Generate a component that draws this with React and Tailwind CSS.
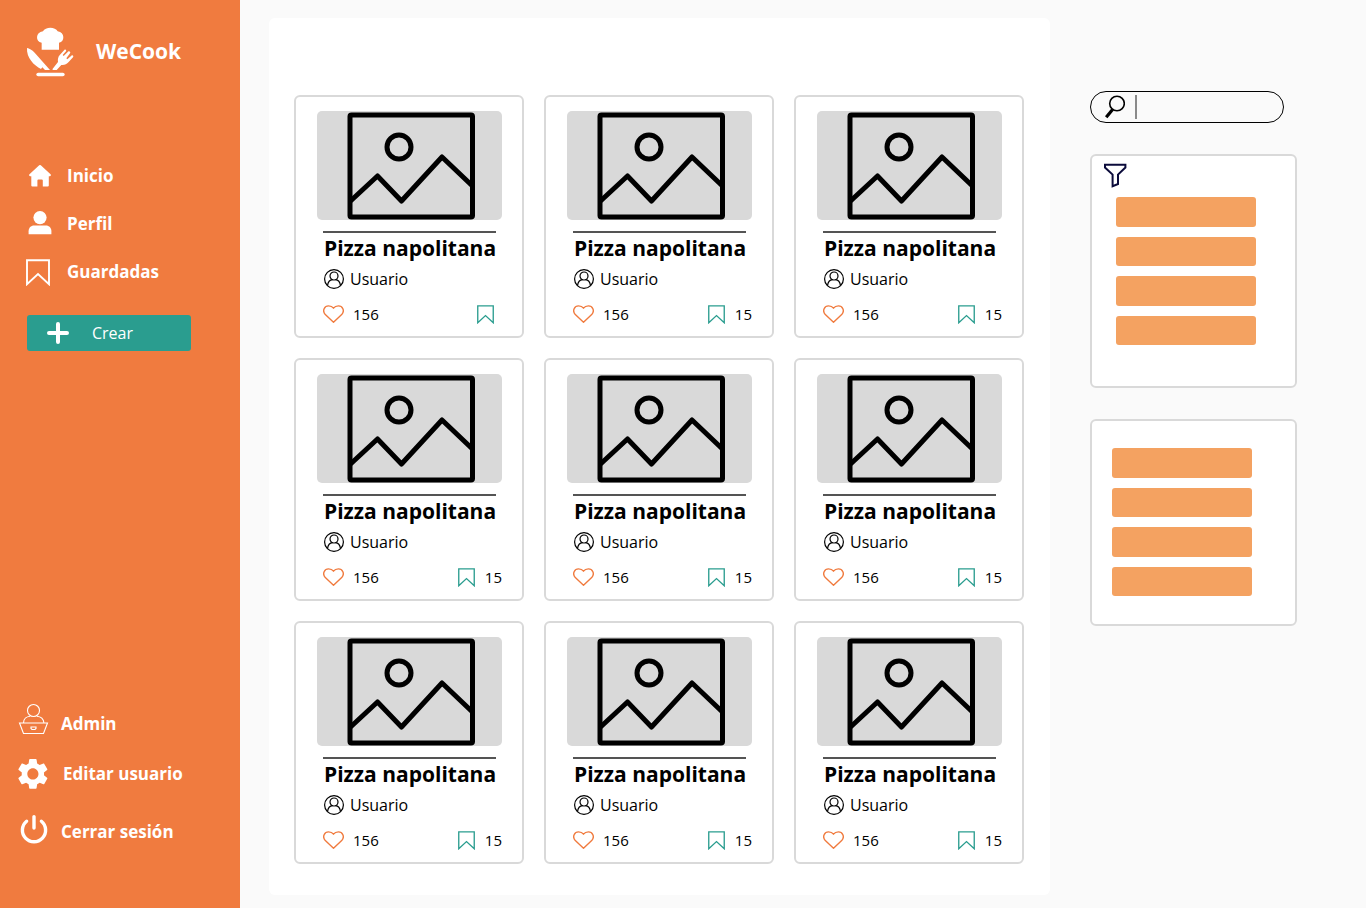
import React from "react";

const cards = [
  { likes: 156 },
  { likes: 156, saved: 15 },
  { likes: 156, saved: 15 },
  { likes: 156, saved: 15 },
  { likes: 156, saved: 15 },
  { likes: 156, saved: 15 },
  { likes: 156, saved: 15 },
  { likes: 156, saved: 15 },
  { likes: 156, saved: 15 },
];

function Logo() {
  return (
    <svg viewBox="82 51 144 150" className="h-[50px] w-12 shrink-0 overflow-visible" fill="#fff" aria-hidden="true">
      <path d="M126 119V98C107 96 107 66 130 64C137 50 167 50 174 64C196 66 196 96 178 98V119Z" />
      <path d="M82 114C89 115 97 120 105 128L151 180H136L128 172L124 177C103 166 80 144 82 114Z" />
      <path d="M160 180H171L185 165C194 166 201 163 207 156L220 142C223 138 219 134 215 137L203 148L200 145L211 130C214 126 209 122 205 125L192 138L189 135L199 124C201 120 197 117 194 120L181 134C175 140 174 148 175 156L158 178Z" />
      <rect x="110" y="188" width="85" height="11" rx="5.5" />
    </svg>
  );
}

function HomeIcon() {
  return (
    <svg viewBox="0 0 24 24" className="h-6 w-6" fill="#fff" aria-hidden="true">
      <path d="M11.2 1.3Q12 .7 12.8 1.3L22.8 10.6Q23.4 12 22 12.2H20.8V21.5Q20.8 22.6 19.7 22.6H14.8V16.4Q14.8 15.4 13.8 15.4H10.4Q9.4 15.4 9.4 16.4V22.6H4.4Q3.3 22.6 3.3 21.5V12.2H2Q.6 12 1.2 10.6Z" />
    </svg>
  );
}

function PersonIcon() {
  return (
    <svg viewBox="0 1 24 24" className="h-6 w-6 overflow-visible" fill="#fff" aria-hidden="true">
      <circle cx="12" cy="6.6" r="6.6" />
      <path d="M.6 23.3V20.2C.6 16.8 2.8 14.4 6.2 14.4H17.8C21.2 14.4 23.4 16.8 23.4 20.2V23.3Z" />
    </svg>
  );
}

function BookmarkIcon({ className, stroke }) {
  return (
    <svg viewBox="0 0 24 27" className={className} fill="none" stroke={stroke} strokeWidth="1.9" aria-hidden="true">
      <path d="M1 1.2H23V25.2L12 15L1 25.2Z" />
    </svg>
  );
}

function AdminIcon() {
  return (
    <svg viewBox="-0.5 5 30 32" className="h-8 w-[30px] overflow-visible" fill="none" stroke="#fff" strokeWidth="1.1" aria-hidden="true">
      <circle cx="15" cy="7.5" r="6" />
      <path d="M5 20C5 16 8 13.6 11.6 13.3M18.4 13.3C22 13.6 25 16 25.5 20M1 20H29L25 30.5H5Z" />
      <path d="M12.5 24H17.5V25.5L16.5 26.5H13.5L12.5 25.5Z" />
    </svg>
  );
}

function GearIcon() {
  return (
    <svg viewBox="2.4 2.4 20 20" className="h-[31px] w-[31px] overflow-visible" fill="#fff" aria-hidden="true">
      <path d="M19.14 12.94c.04-.3.06-.61.06-.94 0-.32-.02-.64-.07-.94l2.03-1.58c.18-.14.23-.41.12-.61l-1.92-3.32c-.12-.22-.37-.29-.59-.22l-2.39.96c-.5-.38-1.03-.7-1.62-.94l-.36-2.54c-.04-.24-.24-.41-.48-.41h-3.84c-.24 0-.43.17-.47.41l-.36 2.54c-.59.24-1.13.57-1.62.94l-2.39-.96c-.22-.08-.47 0-.59.22L2.74 8.87c-.12.21-.08.47.12.61l2.03 1.58c-.05.3-.09.63-.09.94s.02.64.07.94l-2.03 1.58c-.18.14-.23.41-.12.61l1.92 3.32c.12.22.37.29.59.22l2.39-.96c.5.38 1.03.7 1.62.94l.36 2.54c.05.24.24.41.48.41h3.84c.24 0 .44-.17.47-.41l.36-2.54c.59-.24 1.13-.56 1.62-.94l2.39.96c.22.08.47 0 .59-.22l1.92-3.32c.12-.22.07-.47-.12-.61l-2.01-1.58zM12 15.6c-1.98 0-3.6-1.62-3.6-3.6s1.62-3.6 3.6-3.6 3.6 1.62 3.6 3.6-1.62 3.6-3.6 3.6z" />
    </svg>
  );
}

function PowerIcon() {
  return (
    <svg viewBox="0 3 28 30" className="h-[30px] w-7 overflow-visible" fill="none" stroke="#fff" strokeWidth="3.4" strokeLinecap="round" aria-hidden="true">
      <path d="M14 2.6V14M6.6 7.2A11.6 11.6 0 1 0 21.4 7.2" />
    </svg>
  );
}

function PicturePlaceholder() {
  return (
    <svg viewBox="-1.5 1 128 108" className="h-[108px] w-32 overflow-visible" fill="none" stroke="#000" strokeWidth="5" strokeLinejoin="round" role="img" aria-label="Foto de la receta">
      <rect x="2.5" y="4" width="122.5" height="102" rx="1.5" />
      <circle cx="51.5" cy="36" r="12" />
      <path d="M3 90L30 65L54 90L94.5 46L125 75" />
    </svg>
  );
}

function UserIcon() {
  return (
    <svg viewBox="0 0 20 20" className="h-5 w-5 overflow-visible" fill="none" stroke="#000" strokeWidth="1.2" aria-hidden="true">
      <circle cx="10" cy="10" r="9.4" />
      <circle cx="10" cy="7" r="4" />
      <path d="M3.5 16.6C4 12.8 6.2 10.8 8.6 10.6M11.4 10.6C13.8 10.8 16 12.8 16.5 16.6" />
    </svg>
  );
}

function HeartIcon() {
  return (
    <svg viewBox="0 0 21 18" className="h-[18px] w-[21px]" fill="none" stroke="#f07b3f" strokeWidth="1.4" strokeLinejoin="round" aria-hidden="true">
      <path d="M10.5 17.2L2.3 9.6C-1.2 5.6 1.6 .9 5.6 .9C7.8 .9 9.6 2 10.5 3.2C11.4 2 13.2 .9 15.4 .9C19.4 .9 22.2 5.6 18.7 9.6Z" />
    </svg>
  );
}

function NavLink({ icon, children, iconBox }) {
  return (
    <a href="#" className="flex h-12 items-center text-[17px] font-bold text-white">
      <span className={iconBox}>{icon}</span>
      {children}
    </a>
  );
}

function RecipeCard({ likes, saved }) {
  return (
    <article className="rounded-md border-2 border-[#d9d9d9] pt-[14px] pr-5 pb-3 pl-[21px]">
      <div className="flex h-[109px] items-center justify-center rounded-[5px] bg-[#d9d9d9]">
        <PicturePlaceholder />
      </div>
      <div className="mx-[6px] mt-[11px] h-[2px] bg-[#545454]" />
      <h2 className="mx-[7px] text-[21px] leading-[30px] font-bold whitespace-nowrap text-black">Pizza napolitana</h2>
      <div className="mx-[7px] mt-[6px] flex h-5 items-center gap-[6px] text-base text-black">
        <UserIcon />
        <span>Usuario</span>
      </div>
      <div className="mt-[15px] ml-[6px] flex h-5 items-center justify-between text-[15px] text-black">
        <button type="button" aria-label="Me gusta" className="flex items-center gap-[9px]">
          <HeartIcon />
          <span>{likes}</span>
        </button>
        <button type="button" aria-label="Guardar" className={saved ? "flex items-center gap-[10px]" : "mr-2 flex items-center"}>
          <BookmarkIcon className="h-[19px] w-[17px]" stroke="#2a9d8f" />
          {saved && <span>{saved}</span>}
        </button>
      </div>
    </article>
  );
}

function OptionList({ label }) {
  return (
    <div className="flex h-[148px] w-[140px] flex-col gap-[10px]">
      {[1, 2, 3, 4].map((n) => (
        <button key={n} type="button" aria-label={`${label} ${n}`} className="flex-1 rounded-[3px] bg-[#f4a261]" />
      ))}
    </div>
  );
}

export default function App() {
  return (
    <div className="flex min-h-screen bg-[#fafafa] font-['Open_Sans','Noto_Sans',sans-serif]">
      <nav className="flex w-60 shrink-0 flex-col bg-[#f07b3f] pt-[27px] pb-[52px]">
        <a href="#" className="flex items-center gap-[21px] pl-[27px] text-[21px] font-bold text-white">
          <Logo />
          WeCook
        </a>
        <div className="mt-[75px] pl-[26px]">
          <NavLink iconBox="flex w-[41px] pl-[2px]" icon={<HomeIcon />}>Inicio</NavLink>
          <NavLink iconBox="flex w-[41px] pl-[2px]" icon={<PersonIcon />}>Perfil</NavLink>
          <NavLink iconBox="flex w-[41px]" icon={<BookmarkIcon className="h-[27px] w-6" stroke="#fff" />}>Guardadas</NavLink>
        </div>
        <button type="button" className="mt-[19px] ml-[27px] flex h-9 w-[164px] items-center gap-[23px] rounded-[3px] bg-[#2a9d8f] pl-5 text-base text-white">
          <svg viewBox="0 0 22 22" className="h-[22px] w-[22px]" stroke="#fff" strokeWidth="4" strokeLinecap="round" aria-hidden="true">
            <path d="M11 2V20M2 11H20" />
          </svg>
          Crear
        </button>
        <div className="mt-auto flex flex-col gap-[2px] pl-[18px]">
          <NavLink iconBox="w-[43px]" icon={<AdminIcon />}>Admin</NavLink>
          <NavLink iconBox="w-[45px]" icon={<GearIcon />}>Editar usuario</NavLink>
        </div>
        <div className="mt-[10px] pl-[18px]">
          <NavLink iconBox="w-[43px] pl-[2px]" icon={<PowerIcon />}>Cerrar sesión</NavLink>
        </div>
      </nav>

      <main className="mt-[18px] mb-[13px] ml-[29px] flex-1 rounded-md bg-white pt-[77px] pr-[26px] pb-[31px] pl-[25px]">
        <div className="grid grid-cols-3 gap-5">
          {cards.map((card, i) => (
            <RecipeCard key={i} {...card} />
          ))}
        </div>
      </main>

      <aside className="mr-[69px] ml-10 w-[207px] shrink-0 pt-[91px]">
        <label className="flex h-8 w-[194px] items-center gap-[10px] rounded-full border border-black pl-[13px]">
          <svg viewBox="0 0 21 24" className="h-6 w-[21px] shrink-0" fill="none" stroke="#000" aria-hidden="true">
            <circle cx="13" cy="8.5" r="7.3" strokeWidth="1.6" />
            <path d="M8.6 14.5L2.2 22.2" strokeWidth="3.2" />
          </svg>
          <input type="text" aria-label="Buscar" className="h-6 w-32 border-l-2 border-[#8a8a8a] bg-transparent pl-2 text-sm outline-none" />
        </label>
        <section className="mt-[31px] rounded-md border-2 border-[#d9d9d9] bg-white pt-[7px] pb-[41px] pl-[11px]">
          <svg viewBox="0 0 24 25" className="h-[25px] w-6" fill="none" stroke="#0b0b3b" strokeWidth="2" aria-hidden="true">
            <path d="M2 1.8H22.4V4.6L15 11.6V21L9.6 23.2V11.6L2 4.6Z" />
          </svg>
          <div className="mt-[9px] pl-[13px]">
            <OptionList label="Filtro" />
          </div>
        </section>
        <section className="mt-[31px] rounded-md border-2 border-[#d9d9d9] bg-white pt-[27px] pb-7 pl-5">
          <OptionList label="Categoría" />
        </section>
      </aside>
    </div>
  );
}
